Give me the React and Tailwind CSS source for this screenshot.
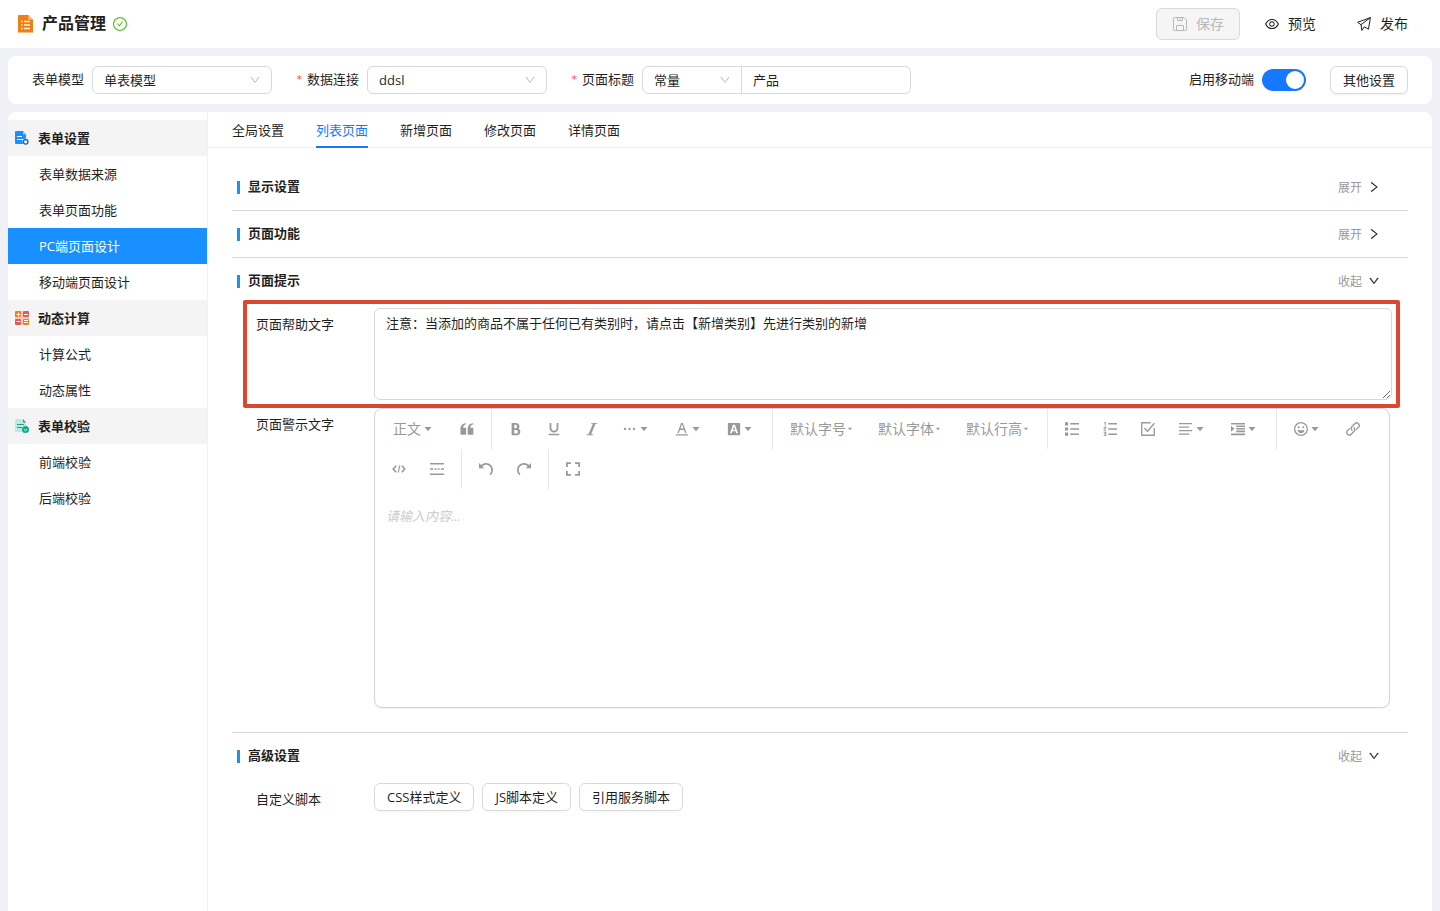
import { useState } from 'react'
import {
  AiOutlineCheckCircle,
  AiOutlineDown,
  AiOutlineEye,
  AiOutlineRight,
} from 'react-icons/ai'

const menuGroups = [
  { title: '表单设置', icon: 'form', items: ['表单数据来源', '表单页面功能', 'PC端页面设计', '移动端页面设计'] },
  { title: '动态计算', icon: 'calc', items: ['计算公式', '动态属性'] },
  { title: '表单校验', icon: 'check', items: ['前端校验', '后端校验'] },
]

const tabs = ['全局设置', '列表页面', '新增页面', '修改页面', '详情页面']

const toolbar = [
  { type: 'heading', label: '正文' },
  { type: 'icon', name: 'quote', label: '引用' },
  { type: 'divider' },
  { type: 'icon', name: 'bold', label: '粗体' },
  { type: 'icon', name: 'underline', label: '下划线' },
  { type: 'icon', name: 'italic', label: '斜体' },
  { type: 'icon', name: 'more', label: '更多', caret: true },
  { type: 'icon', name: 'color', label: '文字颜色', caret: true },
  { type: 'icon', name: 'bgColor', label: '背景色', caret: true },
  { type: 'divider' },
  { type: 'select', label: '默认字号' },
  { type: 'select', label: '默认字体' },
  { type: 'select', label: '默认行高' },
  { type: 'divider' },
  { type: 'icon', name: 'bulleted', label: '无序列表' },
  { type: 'icon', name: 'numbered', label: '有序列表' },
  { type: 'icon', name: 'todo', label: '待办' },
  { type: 'icon', name: 'align', label: '对齐', caret: true },
  { type: 'icon', name: 'indent', label: '缩进', caret: true },
  { type: 'divider' },
  { type: 'icon', name: 'emotion', label: '表情', caret: true },
  { type: 'icon', name: 'link', label: '链接' },
  { type: 'icon', name: 'code', label: '代码' },
  { type: 'icon', name: 'split', label: '分割线' },
  { type: 'divider' },
  { type: 'icon', name: 'undo', label: '撤销' },
  { type: 'icon', name: 'redo', label: '重做' },
  { type: 'divider' },
  { type: 'icon', name: 'fullscreen', label: '全屏' },
]

const undoPath =
  'M512 64A510.3 510.3 0 0 0 150 214L0 64v384h384L240.500 304.500A382.800 382.800 0 0 1 512 192c212 0 384 172 384 384 0 114.700-50.300 217.600-130 288l84.700 96a510.700 510.700 0 0 0 173.300-384c0-282.800-229.200-512-512-512z'

const editorIcons = {
  quote: (
    <path d="M448 96v72c-150 32-210 140-210 250h162a48 48 0 0 1 48 48v414a48 48 0 0 1-48 48H80a48 48 0 0 1-48-48V540C32 280 150 112 448 96zM976 96v72c-150 32-210 140-210 250h162a48 48 0 0 1 48 48v414a48 48 0 0 1-48 48H608a48 48 0 0 1-48-48V540c0-260 118-428 416-444z" />
  ),
  bold: (
    <path d="M707.900 484.600A254.900 254.900 0 0 0 768 320c0-141.200-114.800-256-256-256H192v896h384c141.200 0 256-114.800 256-256a256 256 0 0 0-124.100-219.400zM384 192h101.500c56 0 101.500 57.400 101.500 128s-45.500 128-101.500 128H384V192z m159 640H384v-256h159c58.500 0 106 57.400 106 128s-47.500 128-106 128z" />
  ),
  underline: (
    <path d="M704 64h128v416c0 159-143.300 288-320 288S192 639 192 480V64h128v416c0 40.200 18.200 78.700 51.400 108.500C408.300 621.700 458.200 640 512 640s103.700-18.300 140.600-51.500C685.800 558.700 704 520.200 704 480V64zM128 864h768v96H128z" />
  ),
  italic: <path d="M896 64v64h-128L448 896h128v64H128v-64h128L576 128h-128V64z" />,
  more: (
    <>
      <circle cx="146" cy="512" r="84" />
      <circle cx="476" cy="512" r="84" />
      <circle cx="806" cy="512" r="84" />
    </>
  ),
  color: (
    <path d="M64 896h896v90H64zM361 576h303l81 224h102L579 64H445L177 800h102l82-224zM512 160l116 320H396l116-320z" />
  ),
  bgColor: (
    <path
      fillRule="evenodd"
      d="M112 64h800a48 48 0 0 1 48 48v800a48 48 0 0 1-48 48H112a48 48 0 0 1-48-48V112a48 48 0 0 1 48-48zM436 200L220 824h132l44-140h232l44 140h132L588 200H436zM512 316l80 260H432l80-260z"
    />
  ),
  bulleted: (
    <path d="M384 80h640v110H384zM384 457h640v110H384zM384 834h640v110H384zM0 20h230v230H0zM0 397h230v230H0zM0 774h230v230H0z" />
  ),
  numbered: (
    <path d="M384 80h640v110H384zM384 457h640v110H384zM384 834h640v110H384zM130 0h70v270h-70V70H70V20zM50 350h190v170H130v56h110v60H50V470h130v-56H50zM50 720h190v304H50v-62h120v-56H80v-60h90v-62H50z" />
  ),
  todo: (
    <>
      <path d="M700 56H56v912h912V440" fill="none" stroke="currentColor" strokeWidth="96" />
      <path d="M250 440l230 230L980 90" fill="none" stroke="currentColor" strokeWidth="104" />
    </>
  ),
  align: <path d="M0 80h960v90H0zM0 330h740v90H0zM0 590h960v90H0zM0 840h740v90H0z" />,
  indent: <path d="M0 64h1024v116H0zM384 250h640v116H384zM384 440h640v116H384zM384 630h640v116H384zM0 844h1024v116H0zM0 280v424l250-212z" />,
  emotion: (
    <>
      <circle cx="512" cy="512" r="464" fill="none" stroke="currentColor" strokeWidth="96" />
      <circle cx="340" cy="380" r="76" />
      <circle cx="684" cy="380" r="76" />
      <path d="M260 560c140 70 364 70 504 0-10 150-110 250-252 250S270 710 260 560z" />
    </>
  ),
  link: (
    <g fill="none" stroke="currentColor" strokeWidth="100" strokeLinecap="round">
      <path d="M440 600a190 190 0 0 1 0-270L640 124a190 190 0 0 1 270 270L760 540" />
      <path d="M584 424a190 190 0 0 1 0 270L384 900a190 190 0 0 1-270-270l150-146" />
    </g>
  ),
  code: (
    <g fill="none" stroke="currentColor">
      <path d="M300 270L90 512l210 242M724 270l210 242-210 242" strokeWidth="120" />
      <path d="M580 250L444 774" strokeWidth="80" />
    </g>
  ),
  split: <path d="M0 80h1024v96H0zM0 848h1024v96H0zM0 464h240v96H0zM340 464h140v96H340zM560 464h140v96H560zM800 464h224v96H800z" />,
  undo: <path d={undoPath} />,
  redo: <path d={undoPath} transform="matrix(-1 0 0 1 1024 0)" />,
  fullscreen: (
    <path d="M0 20h360v130H130v210H0zM664 20h360v340H894V150H664zM0 664h130v210h230v130H0zM894 664h130v340H664V874h230z" />
  ),
}

const EditorIcon = ({ name }) => (
  <svg viewBox="0 0 1024 1024" className="size-3.5 shrink-0" fill="currentColor" aria-hidden="true">
    {editorIcons[name]}
  </svg>
)

const Caret = ({ small }) => (
  <svg viewBox="0 0 14 14" className={small ? 'size-2 shrink-0' : 'size-3.5 shrink-0'} fill="currentColor" aria-hidden="true">
    <path d="M3.500 5h7L7 9.300z" />
  </svg>
)

const ToolbarItem = ({ item }) => {
  if (item.type === 'divider') return <span className="mx-[5px] h-10 w-px bg-[#e8e8e8]" />
  if (item.type === 'heading') {
    return (
      <button type="button" className="flex h-10 w-[68px] items-center justify-center text-sm">
        {item.label}
        <Caret />
      </button>
    )
  }
  if (item.type === 'select') {
    return (
      <button type="button" className="flex h-10 items-center px-3 text-sm">
        {item.label}
        <Caret small />
      </button>
    )
  }
  return (
    <button type="button" aria-label={item.label} className="flex h-10 items-center px-3">
      <EditorIcon name={item.name} />
      {item.caret && <Caret />}
    </button>
  )
}

const AppLogo = () => (
  <svg viewBox="0 0 15 18" className="h-[18px] w-[15px]" aria-hidden="true">
    <path d="M1 0h9.500L15 4.500V17a1 1 0 0 1-1 1H1a1 1 0 0 1-1-1V1a1 1 0 0 1 1-1z" fill="#ee7f13" />
    <path d="M10.500 0L15 4.500h-4.500z" fill="#f9c48f" />
    <path d="M3 6.500h1.500M6 6.500h6M3 10h1.500M6 10h6M3 13.500h1.500M6 13.500h6" stroke="#fff0dc" strokeWidth="1.300" />
    <path d="M0 17h15v1H0z" fill="#f7bd84" />
  </svg>
)

const GroupIcon = ({ name }) => {
  if (name === 'form') {
    return (
      <svg viewBox="0 0 14 14" className="size-3.5" fill="none" aria-hidden="true">
        <path d="M1 0h7l3 3.500v9.500H1a1 1 0 0 1-1-1V1a1 1 0 0 1 1-1z" fill="#1890ff" />
        <path d="M8 0l3 3.500H8z" fill="#8cc8ff" />
        <path d="M2 5.500h5M2 8.500h7" stroke="#fff" />
        <circle cx="10.700" cy="10.800" r="3.300" fill="#f4f4f4" />
        <circle cx="10.700" cy="10.800" r="2.300" fill="#fff" stroke="#315da8" strokeWidth="1.300" />
      </svg>
    )
  }
  if (name === 'calc') {
    return (
      <svg viewBox="0 0 14 14" className="size-3.5" fill="none" aria-hidden="true">
        <path d="M6 0h2v14H6zM0 6h14v2H0z" fill="#f4c6b0" />
        <rect width="6" height="6" rx="1" fill="#ee7f13" />
        <rect x="8" width="6" height="6" rx="1" fill="#d95f5f" />
        <rect y="8" width="6" height="6" rx="1" fill="#d95f5f" />
        <rect x="8" y="8" width="6" height="6" rx="1" fill="#ee7f13" />
        <path d="M1.500 3.500h4M3.500 1.500v4M9 3.500h4M1.500 10.500h4M9 9.500h4M9 11.500h4" stroke="#fff" />
      </svg>
    )
  }
  return (
    <svg viewBox="0 0 14 14" className="size-3.5" fill="none" aria-hidden="true">
      <path d="M1 0h7l3 3.500V13H1a1 1 0 0 1-1-1V1a1 1 0 0 1 1-1z" fill="#bfe9de" />
      <path d="M8 0l3 3.500H8z" fill="#16a88c" />
      <path d="M2 5.500h7M2 8.500h5" stroke="#16a88c" />
      <circle cx="10.500" cy="10.500" r="3.500" fill="#16a88c" />
      <path d="M8.800 10l1.700 1.700 1.700-1.700" stroke="#fff" />
    </svg>
  )
}

const SaveIcon = () => (
  <svg viewBox="0 0 16 16" className="size-4" fill="none" stroke="currentColor" aria-hidden="true">
    <path d="M2.500 1.500H12L14.500 4v9.500a1 1 0 0 1-1 1h-11a1 1 0 0 1-1-1v-11a1 1 0 0 1 1-1z" />
    <path d="M5.500 1.500v3h5v-3M8.500 2v1.500M4.500 14.500v-5h7v5" />
  </svg>
)

const PublishIcon = () => (
  <svg viewBox="-1 -1 16 16" className="size-4" fill="none" stroke="currentColor" strokeLinejoin="round" aria-hidden="true">
    <path d="M13.400.6L.6 5.300l3.400 2.400.9 5.700 2.400-3.600 4.200 2.400zM13.400.6L4 7.700" />
  </svg>
)

const HeaderButton = ({ icon, label, disabled }) => (
  <button
    type="button"
    disabled={disabled}
    className={`flex h-8 items-center gap-2 rounded-md border px-[15px] text-sm ${disabled ? 'border-[#d9d9d9] bg-[#f5f5f5] text-[#b8b8b8]' : 'border-transparent'}`}
  >
    {icon}
    {label}
  </button>
)

const SelectBox = ({ id, value, className }) => (
  <div className={`relative ${className}`}>
    <select id={id} defaultValue={value} className="block h-7 w-full appearance-none rounded-[inherit] border border-[#d9d9d9] bg-white pl-[11px]">
      <option>{value}</option>
    </select>
    <AiOutlineDown className="pointer-events-none absolute top-2 right-[11px] size-3 text-[#bfbfbf]" />
  </div>
)

const FieldLabel = ({ htmlFor, required, children }) => (
  <label htmlFor={htmlFor} className="flex pb-0.5">
    {required && (
      <span className="mr-1 w-[7px] pt-px font-['DejaVu_Sans_Mono',monospace] text-[11px] leading-5 text-[#ff4d4f]">*</span>
    )}
    {children}
  </label>
)

const OutlineButton = ({ children }) => (
  <button type="button" className="h-7 rounded-md border border-[#d9d9d9] bg-white px-3 shadow-[0_2px_0_rgba(0,0,0,0.02)]">
    {children}
  </button>
)

const Section = ({ title, open, onToggle, last, children }) => (
  <section className={`${last ? '' : 'border-b border-[#d9d9d9]'} ${open ? 'pb-6' : 'pb-1'}`}>
    <div className="flex h-[42px] items-center pt-1 pr-[27px] pl-[5px]">
      <span className="mr-2 h-[13px] w-[3px] bg-[#1890ff]" />
      <h2 className="pb-0.5 font-semibold">{title}</h2>
      <button type="button" onClick={onToggle} className="ml-auto flex items-center gap-[5px] text-xs text-[#999]">
        <span className="pt-0.5">{open ? '收起' : '展开'}</span>
        {open ? (
          <AiOutlineDown className="mx-px size-3 text-[#222]" strokeWidth="20" />
        ) : (
          <AiOutlineRight className="size-3.5 text-[#222]" />
        )}
      </button>
    </div>
    {open && children}
  </section>
)

const Sidebar = ({ active, onSelect }) => (
  <nav className="w-[200px] shrink-0 border-r border-[#f0f0f0] pt-2">
    {menuGroups.map((group) => (
      <div key={group.title}>
        <div className="flex h-9 items-center gap-[9px] bg-[#f4f4f4] pl-[7px] font-semibold">
          <GroupIcon name={group.icon} />
          {group.title}
        </div>
        {group.items.map((item) => (
          <button
            key={item}
            type="button"
            onClick={() => onSelect(item)}
            className={`block h-9 w-full pl-[31px] text-left ${item === active ? 'bg-[#1890ff] text-white' : ''}`}
          >
            {item}
          </button>
        ))}
      </div>
    ))}
  </nav>
)

const App = () => {
  const [activeMenu, setActiveMenu] = useState('PC端页面设计')
  const [activeTab, setActiveTab] = useState('列表页面')
  const [mobile, setMobile] = useState(true)
  const [opened, setOpened] = useState({ display: false, feature: false, tips: true, advanced: true })

  const toggle = (key) => setOpened((prev) => ({ ...prev, [key]: !prev[key] }))

  return (
    <div className="flex min-h-screen flex-col bg-[#f0f1f6] font-['Open_Sans','Noto_Sans_CJK_SC',sans-serif] text-[13px] leading-5 text-[#1f1f1f]">
      <header className="flex h-12 items-center bg-white pr-4 pl-[18px]">
        <AppLogo />
        <h1 className="mr-1.5 ml-[9px] pb-0.5 text-base font-semibold">产品管理</h1>
        <AiOutlineCheckCircle className="size-4 text-[#52c41a]" />
        <div className="ml-auto flex gap-2">
          <HeaderButton icon={<SaveIcon />} label="保存" disabled />
          <HeaderButton icon={<AiOutlineEye className="size-4" />} label="预览" />
          <HeaderButton icon={<PublishIcon />} label="发布" />
        </div>
      </header>

      <div className="m-2 flex h-12 items-center gap-6 rounded-lg bg-white px-6">
        <div className="flex items-center gap-2">
          <FieldLabel htmlFor="model">表单模型</FieldLabel>
          <SelectBox id="model" value="单表模型" className="w-[180px] rounded-md" />
        </div>
        <div className="flex items-center gap-2">
          <FieldLabel htmlFor="connection" required>数据连接</FieldLabel>
          <SelectBox id="connection" value="ddsl" className="w-[180px] rounded-md" />
        </div>
        <div className="flex items-center gap-2">
          <FieldLabel htmlFor="title" required>页面标题</FieldLabel>
          <div className="flex">
            <SelectBox id="titleType" value="常量" className="w-[100px] rounded-l-md" />
            <input
              id="title"
              defaultValue="产品"
              className="-ml-px h-7 w-[170px] rounded-r-md border border-[#d9d9d9] px-[11px] pb-0.5"
            />
          </div>
        </div>
        <div className="ml-auto flex items-center gap-2">
          <FieldLabel htmlFor="mobile">启用移动端</FieldLabel>
          <input
            id="mobile"
            type="checkbox"
            role="switch"
            checked={mobile}
            onChange={(e) => setMobile(e.target.checked)}
            className="h-[22px] w-11 appearance-none rounded-full bg-[#bfbfbf] p-0.5 before:block before:size-[18px] before:rounded-full before:bg-white checked:bg-[#1677ff] checked:before:ml-[22px]"
          />
        </div>
        <OutlineButton>其他设置</OutlineButton>
      </div>

      <div className="mx-2 flex grow overflow-hidden rounded-t-lg bg-white">
        <Sidebar active={activeMenu} onSelect={setActiveMenu} />

        <main className="min-w-0 grow">
          <div role="tablist" className="flex h-9 gap-8 border-b border-[#f0f0f0] px-6">
            {tabs.map((tab) => (
              <button
                key={tab}
                type="button"
                role="tab"
                aria-selected={tab === activeTab}
                onClick={() => setActiveTab(tab)}
                className={`h-9 border-b-2 pt-0.5 ${tab === activeTab ? 'border-[#1677ff] text-[#1677ff]' : 'border-transparent'}`}
              >
                {tab}
              </button>
            ))}
          </div>

          <div className="px-6 pt-4">
            <Section title="显示设置" open={opened.display} onToggle={() => toggle('display')} />
            <Section title="页面功能" open={opened.feature} onToggle={() => toggle('feature')} />

            <Section title="页面提示" open={opened.tips} onToggle={() => toggle('tips')}>
              <div className="mr-2 ml-[11px] flex rounded-xs border-4 border-[#d9482f] p-1">
                <label htmlFor="help" className="w-[123px] shrink-0 pt-1.5 pl-[5px]">页面帮助文字</label>
                <textarea
                  id="help"
                  defaultValue="注意：当添加的商品不属于任何已有类别时，请点击【新增类别】先进行类别的新增"
                  className="block h-[92px] min-w-0 grow resize-y rounded-md border border-[#d9d9d9] px-[11px] py-1"
                />
              </div>
              <div className="mr-[18px] ml-[19px] flex">
                <span id="warnLabel" className="w-[123px] shrink-0 pt-1.5 pl-[5px]">页面警示文字</span>
                <div className="h-[300px] min-w-0 grow rounded-lg border border-[#d2d3dc] shadow-[0_1px_1px_rgba(0,0,0,0.06)]">
                  <div className="flex flex-wrap px-[5px] text-[#999]">
                    {toolbar.map((item, i) => (
                      <ToolbarItem key={i} item={item} />
                    ))}
                  </div>
                  <textarea
                    aria-labelledby="warnLabel"
                    placeholder="请输入内容..."
                    className="block h-[200px] w-full resize-none px-[11px] pt-[17px] outline-none placeholder:text-[#ccc] placeholder:italic"
                  />
                </div>
              </div>
            </Section>

            <Section title="高级设置" open={opened.advanced} onToggle={() => toggle('advanced')} last>
              <div className="mt-2 ml-[19px] flex">
                <span className="w-[123px] shrink-0 pt-1.5 pl-[5px]">自定义脚本</span>
                <div className="flex gap-2">
                  <OutlineButton>CSS样式定义</OutlineButton>
                  <OutlineButton>JS脚本定义</OutlineButton>
                  <OutlineButton>引用服务脚本</OutlineButton>
                </div>
              </div>
            </Section>
          </div>
        </main>
      </div>
    </div>
  )
}

export default App
